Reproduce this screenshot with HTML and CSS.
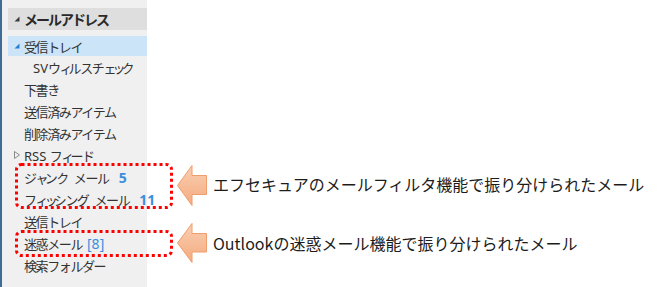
FILE: index.html
```html
<!DOCTYPE html>
<html lang="ja">
<head>
<meta charset="utf-8">
<title>メールアドレス</title>
<link rel="stylesheet" href="styles.css">
</head>
<body>
<div class="screen">
  <nav class="panel">
    <div class="head">
      <svg class="tri" width="6" height="6" viewBox="0 0 6 6"><polygon points="5.5,0.5 5.5,5.5 0.5,5.5" fill="#3a3a3a"/></svg>
      <span>メールアドレス</span>
    </div>
    <div class="row sel">
      <svg class="tri" width="6" height="6" viewBox="0 0 6 6"><polygon points="5.5,0.5 5.5,5.5 0.5,5.5" fill="#2b7fd0"/></svg>
      <span>受信トレイ</span>
    </div>
    <div class="row plain sub"><span class="lbl"><span class="lat">SV</span>ウ<span class="sm">ィ</span>ルスチ<span class="sm">ェ</span><span class="sm">ッ</span>ク</span></div>
    <div class="row plain"><span class="lbl">下書き</span></div>
    <div class="row plain"><span class="lbl">送信済みアイテム</span></div>
    <div class="row plain"><span class="lbl">削除済みアイテム</span></div>
    <div class="row">
      <svg class="tri" width="6" height="8" viewBox="0 0 6 8"><polygon points="0.5,0.5 5.5,4 0.5,7.5" fill="none" stroke="#8a8a8a" stroke-width="1"/></svg>
      <span class="lbl"><span class="lat">RSS </span>フ<span class="sm">ィ</span>ード</span>
    </div>
    <div class="group g1">
      <div class="row plain"><span class="lbl">ジ<span class="sm">ャ</span>ンク<span class="gap"> </span>メール</span><b class="count">5</b></div>
      <div class="row plain"><span class="lbl">フ<span class="sm">ィ</span><span class="sm">ッ</span>シング<span class="gap"> </span>メール</span><b class="count">11</b></div>
      <svg class="mark" width="158" height="46" viewBox="0 0 158 46"><rect x="1.5" y="1.5" width="155" height="43" rx="5" fill="none" stroke="#ff0000" stroke-width="3" stroke-dasharray="3 3"/></svg>
    </div>
    <div class="row plain"><span class="lbl">送信トレイ</span></div>
    <div class="group g2">
      <div class="row plain"><span class="lbl">迷惑メール</span><span class="count thin">[8]</span></div>
      <svg class="mark" width="158" height="27" viewBox="0 0 158 27"><rect x="1.5" y="1.5" width="155" height="24" rx="5" fill="none" stroke="#ff0000" stroke-width="3" stroke-dasharray="3 3"/></svg>
    </div>
    <div class="row plain"><span class="lbl">検索フォルダー</span></div>
  </nav>
  <div class="notes">
    <div class="note n1">
      <svg class="arrow" width="30" height="41" viewBox="0 0 30 41">
        <defs><linearGradient id="ag1" x1="0" y1="0" x2="0" y2="1"><stop offset="0" stop-color="#f9cfb2"/><stop offset="1" stop-color="#f4ab7e"/></linearGradient></defs>
        <polygon points="0.5,20.5 15,0.5 15,10.5 29.5,10.5 29.5,29.5 15,29.5 15,40.5" fill="url(#ag1)" stroke="#ef9d6c" stroke-width="1"/>
      </svg>
      <p>エフセキュアのメールフィルタ機能で振り分けられたメール</p>
    </div>
    <div class="note n2">
      <svg class="arrow" width="30" height="40" viewBox="0 0 30 40">
        <defs><linearGradient id="ag2" x1="0" y1="0" x2="0" y2="1"><stop offset="0" stop-color="#f9cfb2"/><stop offset="1" stop-color="#f4ab7e"/></linearGradient></defs>
        <polygon points="0.5,20 15,0.5 15,10.5 29.5,10.5 29.5,29 15,29 15,39.5" fill="url(#ag2)" stroke="#ef9d6c" stroke-width="1"/>
      </svg>
      <p>Outlookの迷惑メール機能で振り分けられたメール</p>
    </div>
  </div>
</div>
</body>
</html>
```

FILE: styles.css
```css
html, body {
  margin: 0;
  padding: 0;
  background: #ffffff;
}

.screen {
  display: flex;
  width: 662px;
  height: 287px;
  overflow: hidden;
  font-family: "Noto Sans CJK JP", "Noto Sans", sans-serif;
}

.panel {
  flex: none;
  width: 139px;
  padding: 8px 0 0 6px;
  background: #f0f0f0;
  border-left: 2px solid #3f6b94;
  color: #333333;
  font-size: 13px;
  letter-spacing: -1.4px;
}

.head {
  display: flex;
  align-items: center;
  height: 22px;
  padding-left: 6px;
  background: #dedede;
  font-size: 14px;
  font-weight: 700;
  letter-spacing: -2px;
  color: #2a2a2a;
}

.tri {
  flex: none;
  margin-right: 4px;
}

.row {
  display: flex;
  align-items: center;
  height: 22px;
  padding-left: 6px;
  white-space: nowrap;
}

.row.plain {
  padding-left: 16px;
}

.row.sub {
  padding-left: 25px;
}

.row.sel {
  height: 20px;
  margin-top: 6px;
  background: #cce4f7;
}

.lbl {
  flex: none;
}

.lat {
  font-family: "Noto Sans", sans-serif;
  letter-spacing: 0;
  white-space: pre;
}

.sm {
  letter-spacing: -4px;
}

.gap {
  display: inline-block;
  width: 6px;
}

.count {
  flex: none;
  margin-left: 10px;
  font-family: "Noto Sans", sans-serif;
  font-size: 14px;
  font-weight: 700;
  letter-spacing: 0;
  color: #3a8fdc;
}

.count.thin {
  margin-left: 5px;
  font-weight: 400;
}

.group {
  position: relative;
}

.mark {
  position: absolute;
  left: 7px;
  display: block;
}

.g1 .mark {
  top: -3px;
}

.g2 .mark {
  top: -2px;
}

.notes {
  display: flex;
  flex-direction: column;
  padding: 165px 0 0 30px;
}

.note {
  display: flex;
  align-items: center;
  gap: 6px;
}

.note p {
  margin: 0;
  font-size: 16px;
  color: #1c1c1c;
  white-space: nowrap;
}

.n1 p {
  margin-top: -3px;
}

.n2 {
  margin-top: 17px;
}

.arrow {
  flex: none;
  display: block;
}
```
